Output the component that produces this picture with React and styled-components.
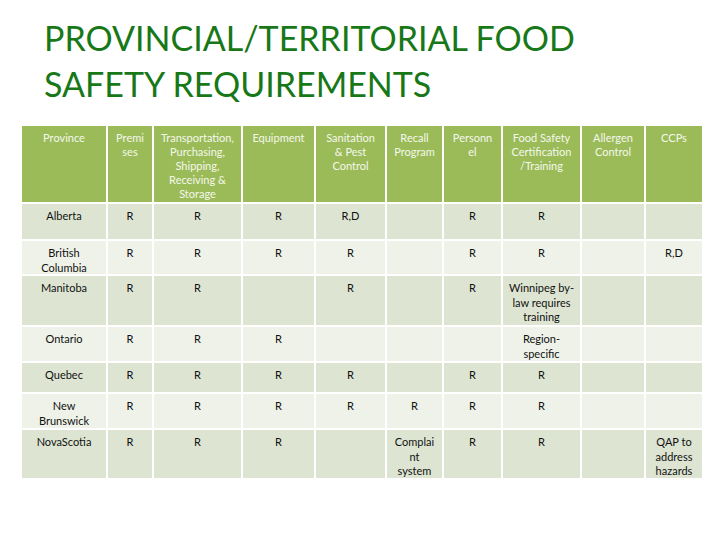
import React from "react";
import styled, { createGlobalStyle } from "styled-components";

const GlobalStyle = createGlobalStyle`
  body {
    margin: 0;
    background: #ffffff;
    font-family: Lato, "Liberation Sans", sans-serif;
  }
`;

const headers = [
  "Province",
  ["Premi", "ses"],
  ["Transportation,", "Purchasing,", "Shipping,", "Receiving &", "Storage"],
  "Equipment",
  ["Sanitation", "& Pest", "Control"],
  ["Recall", "Program"],
  ["Personn", "el"],
  ["Food Safety", "Certification", "/Training"],
  ["Allergen", "Control"],
  "CCPs",
];

const rows = [
  [["Alberta"], "R", "R", "R", "R,D", "", "R", "R", "", ""],
  [["British", "Columbia"], "R", "R", "R", "R", "", "R", "R", "", "R,D"],
  [["Manitoba"], "R", "R", "", "R", "", "R", ["Winnipeg by-", "law requires", "training"], "", ""],
  [["Ontario"], "R", "R", "R", "", "", "", ["Region-", "specific"], "", ""],
  [["Quebec"], "R", "R", "R", "R", "", "R", "R", "", ""],
  [["New", "Brunswick"], "R", "R", "R", "R", "R", "R", "R", "", ""],
  [["NovaScotia"], "R", "R", "R", "", ["Complai", "nt", "system"], "R", "R", "", ["QAP to", "address", "hazards"]],
];

const Page = styled.div`
  width: 720px;
  height: 540px;
  overflow: hidden;
`;

const Title = styled.h1`
  margin: 0;
  padding: 15px 0 0 44px;
  font-family: Lato, "Liberation Sans", sans-serif;
  font-weight: 400;
  font-size: 34px;
  line-height: 46px;
  color: #187818;
  letter-spacing: 0;
`;

const Table = styled.div`
  margin: 19px 0 0 22px;
  width: 680px;
  display: grid;
  grid-template-columns: 84px 44px 87px 71px 69px 55px 57px 77px 62px 56px;
  grid-template-rows: 76px 35px 33px 49px 34px 29px 34px 48px;
  gap: 2px;
`;

const HeadCell = styled.div`
  background: #9bbb59;
  color: #f4f8ec;
  font-size: 11px;
  line-height: 14px;
  text-align: center;
  padding-top: 5px;
`;

const Cell = styled.div`
  background: ${(p) => (p.$alt ? "#eef2e8" : "#dde5d2")};
  color: #111111;
  font-size: 11px;
  line-height: 14.5px;
  text-align: center;
  padding-top: 5px;
`;

const Lines = ({ value }) => {
  const list = Array.isArray(value) ? value : [value];
  return list.map((line, i) => (
    <React.Fragment key={i}>
      {i > 0 && <br />}
      {line}
    </React.Fragment>
  ));
};

const App = () => {
  return (
    <Page>
      <GlobalStyle />
      <Title>
        PROVINCIAL/TERRITORIAL FOOD
        <br />
        SAFETY REQUIREMENTS
      </Title>
      <Table>
        {headers.map((h, i) => (
          <HeadCell key={"h" + i}>
            <Lines value={h} />
          </HeadCell>
        ))}
        {rows.map((row, r) =>
          row.map((value, c) => (
            <Cell key={r + "-" + c} $alt={r % 2 === 1}>
              <Lines value={value} />
            </Cell>
          ))
        )}
      </Table>
    </Page>
  );
};

export default App;
